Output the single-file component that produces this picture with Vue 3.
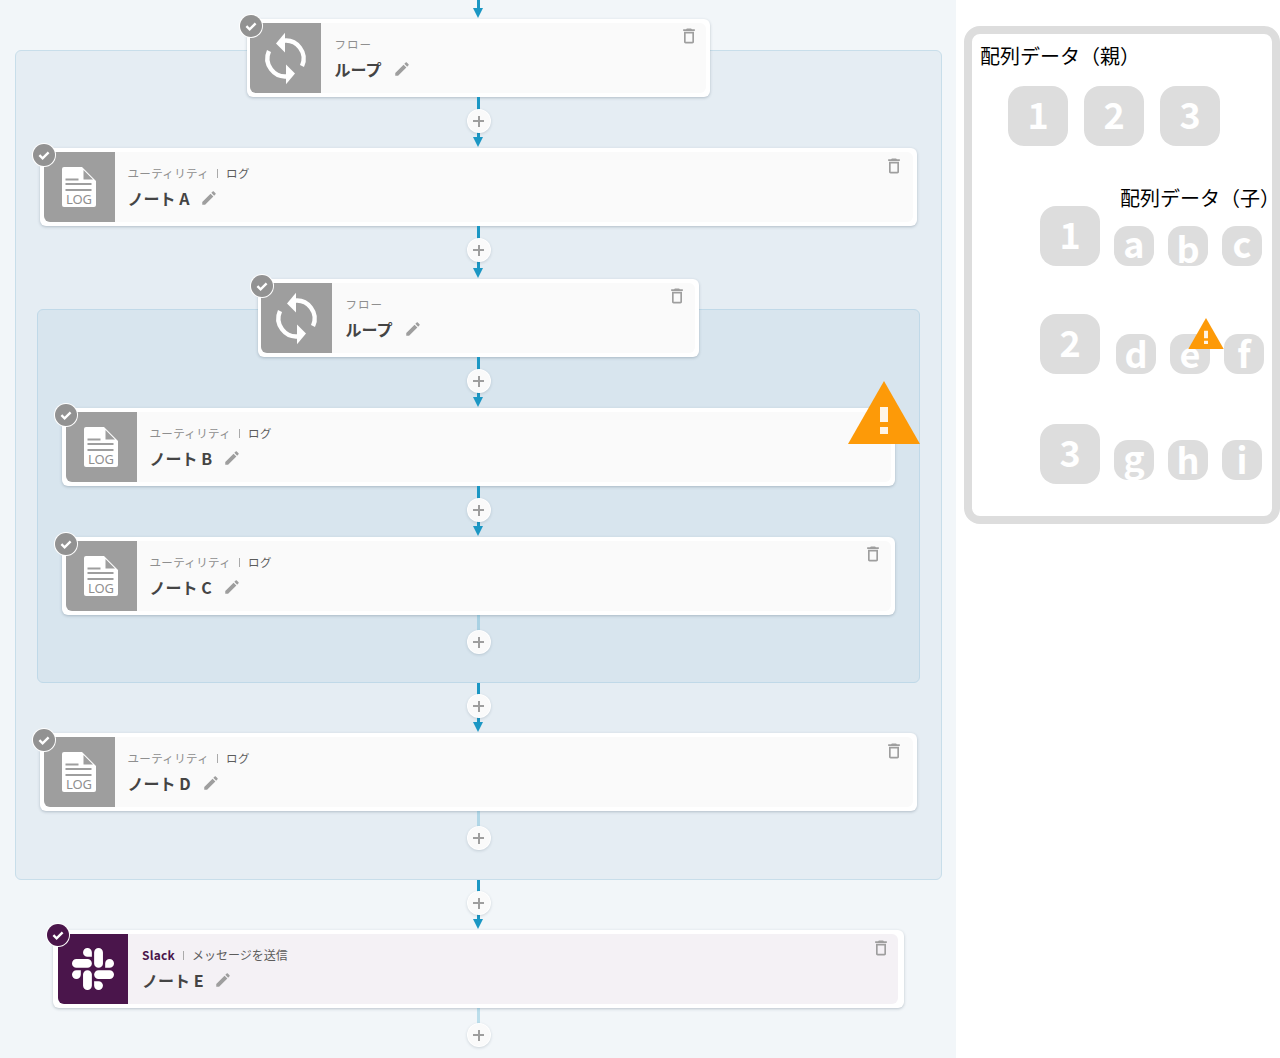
<script setup>
const noteTiles = [
  { n: 1, cls: 'first', letters: [{ t: 'a', lh: 32 }, { t: 'b', lh: 42 }, { t: 'c', lh: 32 }] },
  { n: 2, cls: 'second', letters: [{ t: 'd', lh: 36 }, { t: 'e', lh: 36 }, { t: 'f', lh: 36 }] },
  { n: 3, cls: 'third', letters: [{ t: 'g', lh: 33 }, { t: 'h', lh: 36 }, { t: 'i', lh: 36 }] },
]
</script>

<template>
  <div class="page">
    <svg class="defs" width="0" height="0" aria-hidden="true">
      <symbol id="i-check" viewBox="0 0 22 22">
        <path d="M6.4 11.2l3.2 3.2 6-6" fill="none" stroke="#fff" stroke-width="2.4" />
      </symbol>
      <symbol id="i-pencil" viewBox="0 0 24 24">
        <path d="M3 17.25V21h3.75L17.81 9.94l-3.75-3.75L3 17.25zM20.71 7.04c.39-.39.39-1.02 0-1.41l-2.34-2.34c-.39-.39-1.02-.39-1.41 0l-1.83 1.83 3.75 3.75 1.83-1.83z" />
      </symbol>
      <symbol id="i-trash" viewBox="0 0 24 24">
        <path d="M6 19c0 1.1.9 2 2 2h8c1.1 0 2-.9 2-2V7H6v12zM8 9h8v10H8V9zm7.5-5l-1-1h-5l-1 1H5v2h14V4h-3.5z" />
      </symbol>
      <symbol id="i-loop" viewBox="0 0 71 71">
        <g fill="none" stroke="#fff" stroke-width="4.4">
          <path d="M33 17.8A18 18 0 0 1 52 43" />
          <path d="M38 53.2A18 18 0 0 1 19 28" />
        </g>
        <path d="M35 9.8L26 20.5 35 29.5z" fill="#fff" />
        <path d="M36 61.2L45 50.5 36 41.5z" fill="#fff" />
      </symbol>
      <symbol id="i-log" viewBox="0 0 71 71">
        <path d="M20 15h18l14 14v24a2 2 0 0 1-2 2H20a2 2 0 0 1-2-2V17a2 2 0 0 1 2-2z" fill="#fff" />
        <path d="M39.500 18L49 27.500h-9.500z" fill="#9e9e9e" />
        <path d="M21.500 27.500h13M21.500 32h26M21.500 38h26" stroke="#9e9e9e" stroke-width="2" fill="none" />
      </symbol>
      <symbol id="i-slack" viewBox="0 0 24 24">
        <path fill="#fff" d="M5.042 15.165a2.528 2.528 0 0 1-2.52 2.523A2.528 2.528 0 0 1 0 15.165a2.527 2.527 0 0 1 2.522-2.52h2.52v2.52zM6.313 15.165a2.527 2.527 0 0 1 2.521-2.52 2.527 2.527 0 0 1 2.521 2.52v6.313A2.528 2.528 0 0 1 8.834 24a2.528 2.528 0 0 1-2.521-2.522v-6.313zM8.834 5.042a2.528 2.528 0 0 1-2.521-2.52A2.528 2.528 0 0 1 8.834 0a2.528 2.528 0 0 1 2.521 2.522v2.52H8.834zM8.834 6.313a2.528 2.528 0 0 1 2.521 2.521 2.528 2.528 0 0 1-2.521 2.521H2.522A2.528 2.528 0 0 1 0 8.834a2.528 2.528 0 0 1 2.522-2.521h6.312zM18.956 8.834a2.528 2.528 0 0 1 2.522-2.521A2.528 2.528 0 0 1 24 8.834a2.528 2.528 0 0 1-2.522 2.521h-2.522V8.834zM17.688 8.834a2.528 2.528 0 0 1-2.523 2.521 2.527 2.527 0 0 1-2.52-2.521V2.522A2.527 2.527 0 0 1 15.165 0a2.528 2.528 0 0 1 2.523 2.522v6.312zM15.165 18.956a2.528 2.528 0 0 1 2.523 2.522A2.528 2.528 0 0 1 15.165 24a2.527 2.527 0 0 1-2.52-2.522v-2.522h2.52zM15.165 17.688a2.527 2.527 0 0 1-2.52-2.523 2.526 2.526 0 0 1 2.52-2.52h6.313A2.527 2.527 0 0 1 24 15.165a2.528 2.528 0 0 1-2.522 2.523h-6.313z" />
      </symbol>
      <symbol id="i-warn" viewBox="0 0 72 63">
        <path d="M36 0L72 63H0z" fill="#fd9a08" />
        <path d="M32 26h8v15h-8zM32 46h8v7h-8z" fill="#fff" opacity=".9" />
      </symbol>
    </svg>

    <main class="flow">
      <div class="link start"><span class="line"></span><span class="arrow"></span></div>

      <section class="loop outer">
        <article class="card w-463 loop-card">
          <span class="check"><svg><use href="#i-check" /></svg></span>
          <div class="inner">
            <div class="icon"><svg class="icon-svg"><use href="#i-loop" /></svg></div>
            <div class="text">
              <p class="label">フロー</p>
              <p class="title">ループ<svg class="pencil"><use href="#i-pencil" /></svg></p>
            </div>
            <svg class="trash"><use href="#i-trash" /></svg>
          </div>
        </article>
        <div class="link"><span class="line"></span><button class="plus"></button><span class="arrow"></span></div>

        <article class="card w-877">
          <span class="check"><svg><use href="#i-check" /></svg></span>
          <div class="inner">
            <div class="icon">
              <svg class="icon-svg" viewBox="0 0 71 71"><use href="#i-log" /><text x="35" y="52" text-anchor="middle" class="log-text">LOG</text></svg>
            </div>
            <div class="text">
              <p class="label">ユーティリティ<i class="sep"></i><b>ログ</b></p>
              <p class="title">ノート A<svg class="pencil"><use href="#i-pencil" /></svg></p>
            </div>
            <svg class="trash"><use href="#i-trash" /></svg>
          </div>
        </article>
        <div class="link to-loop"><span class="line"></span><button class="plus"></button><span class="arrow"></span></div>

        <section class="loop nested">
          <article class="card w-441 loop-card">
            <span class="check"><svg><use href="#i-check" /></svg></span>
            <div class="inner">
              <div class="icon"><svg class="icon-svg"><use href="#i-loop" /></svg></div>
              <div class="text">
                <p class="label">フロー</p>
                <p class="title">ループ<svg class="pencil"><use href="#i-pencil" /></svg></p>
              </div>
              <svg class="trash"><use href="#i-trash" /></svg>
            </div>
          </article>
          <div class="link"><span class="line"></span><button class="plus"></button><span class="arrow"></span></div>

          <article class="card w-833">
            <span class="check"><svg><use href="#i-check" /></svg></span>
            <div class="inner">
              <div class="icon">
                <svg class="icon-svg" viewBox="0 0 71 71"><use href="#i-log" /><text x="35" y="52" text-anchor="middle" class="log-text">LOG</text></svg>
              </div>
              <div class="text">
                <p class="label">ユーティリティ<i class="sep"></i><b>ログ</b></p>
                <p class="title">ノート B<svg class="pencil"><use href="#i-pencil" /></svg></p>
              </div>
              <svg class="trash"><use href="#i-trash" /></svg>
            </div>
            <svg class="warn-big"><use href="#i-warn" /></svg>
          </article>
          <div class="link"><span class="line"></span><button class="plus"></button><span class="arrow"></span></div>

          <article class="card w-833">
            <span class="check"><svg><use href="#i-check" /></svg></span>
            <div class="inner">
              <div class="icon">
                <svg class="icon-svg" viewBox="0 0 71 71"><use href="#i-log" /><text x="35" y="52" text-anchor="middle" class="log-text">LOG</text></svg>
              </div>
              <div class="text">
                <p class="label">ユーティリティ<i class="sep"></i><b>ログ</b></p>
                <p class="title">ノート C<svg class="pencil"><use href="#i-pencil" /></svg></p>
              </div>
              <svg class="trash"><use href="#i-trash" /></svg>
            </div>
          </article>
          <div class="link tail"><span class="line"></span><button class="plus"></button></div>
        </section>
        <div class="link after-loop"><span class="line"></span><button class="plus"></button><span class="arrow"></span></div>

        <article class="card w-877">
          <span class="check"><svg><use href="#i-check" /></svg></span>
          <div class="inner">
            <div class="icon">
              <svg class="icon-svg" viewBox="0 0 71 71"><use href="#i-log" /><text x="35" y="52" text-anchor="middle" class="log-text">LOG</text></svg>
            </div>
            <div class="text">
              <p class="label">ユーティリティ<i class="sep"></i><b>ログ</b></p>
              <p class="title">ノート D<svg class="pencil"><use href="#i-pencil" /></svg></p>
            </div>
            <svg class="trash"><use href="#i-trash" /></svg>
          </div>
        </article>
        <div class="link tail"><span class="line"></span><button class="plus"></button></div>
      </section>
      <div class="link after-loop"><span class="line"></span><button class="plus"></button><span class="arrow"></span></div>

      <article class="card w-851 slack">
        <span class="check"><svg><use href="#i-check" /></svg></span>
        <div class="inner">
          <div class="icon"><svg class="slack-svg"><use href="#i-slack" /></svg></div>
          <div class="text">
            <p class="label"><strong>Slack</strong><i class="sep"></i><b>メッセージを送信</b></p>
            <p class="title">ノート E<svg class="pencil"><use href="#i-pencil" /></svg></p>
          </div>
          <svg class="trash"><use href="#i-trash" /></svg>
        </div>
      </article>
      <div class="link tail"><span class="line"></span><button class="plus"></button></div>
    </main>

    <aside class="side">
      <div class="box">
        <h2 class="heading">配列データ（親）</h2>
        <div class="parents">
          <span v-for="n in 3" :key="n" class="tile">{{ n }}</span>
        </div>
        <div v-for="row in noteTiles" :key="row.n" class="row" :class="row.cls">
          <span class="tile">{{ row.n }}</span>
          <div class="children">
            <h2 v-if="row.n === 1" class="heading child-heading">配列データ（子）</h2>
            <div class="letters">
              <span v-for="l in row.letters" :key="l.t" class="letter" :style="{ lineHeight: l.lh + 'px' }">
                {{ l.t }}
                <svg v-if="l.t === 'e'" class="warn-small"><use href="#i-warn" /></svg>
              </span>
            </div>
          </div>
        </div>
      </div>
    </aside>
  </div>
</template>

<style>
html,
body {
  margin: 0;
  background: #fff;
}
</style>

<style scoped>
.page {
  display: flex;
  width: 1280px;
  height: 1058px;
  overflow: hidden;
  font-family: "Noto Sans CJK JP", "Noto Sans", sans-serif;
}

.defs {
  position: absolute;
}

.log-text {
  font-family: "Noto Sans", sans-serif;
  font-size: 13px;
  fill: #8f8f8f;
}

.flow {
  flex: none;
  width: 955px;
  height: 1058px;
  padding-left: 1px;
  background: #f2f6f9;
  display: flex;
  flex-direction: column;
  align-items: center;
}

.loop {
  flex: none;
  box-sizing: border-box;
  display: flex;
  flex-direction: column;
  align-items: center;
  border-radius: 6px;
}

.outer {
  width: 927px;
  height: 830px;
  margin-top: 31px;
  background: #e5edf3;
  border: 1px solid #c8deea;
}

.nested {
  width: 883px;
  height: 374px;
  margin-top: 30px;
  background: #d8e5ee;
  border: 1px solid #c0d9e8;
}

.card {
  flex: none;
  position: relative;
  box-sizing: border-box;
  height: 78px;
  padding: 4px 4px 4px 3.5px;
  background: #fff;
  border-radius: 6px;
  box-shadow: 0 1px 3px rgba(60, 80, 100, 0.3);
}

.card.loop-card {
  padding-left: 3px;
}

.loop > .loop-card {
  margin-top: -32px;
}

.nested > .loop-card {
  margin-top: -31px;
}

.w-463 { width: 463px; }
.w-441 { width: 441px; }
.w-877 { width: 877px; }
.w-851 { width: 851px; }
.w-833 { width: 833px; }

.slack {
  padding: 4px 6px 4px 5px;
}

.inner {
  position: relative;
  display: flex;
  height: 70px;
  background: #fafafa;
  border-radius: 6px;
}

.slack .inner {
  background: #f4f1f5;
}

.icon {
  flex: none;
  width: 71px;
  height: 70px;
  background: #9e9e9e;
  border-radius: 0 0 0 6px;
  display: flex;
  align-items: center;
  justify-content: center;
}

.slack .icon {
  width: 70px;
  background: #4a154b;
}

.icon-svg {
  width: 71px;
  height: 71px;
}

.slack-svg {
  width: 42px;
  height: 42px;
}

.text {
  padding-left: 13px;
}

.loop-card .text {
  padding-left: 13.5px;
}

.slack .text {
  padding-left: 14px;
}

.label {
  margin: 12px 0 0;
  height: 18px;
  line-height: 18px;
  font-size: 11.5px;
  letter-spacing: 0.35px;
  color: #8f8f8f;
  display: flex;
  align-items: center;
}

.loop-card .label {
  letter-spacing: 1px;
}

.label b {
  font-weight: 400;
  color: #5c5c5c;
}

.label strong {
  font-weight: 700;
  font-size: 12px;
  letter-spacing: 0.2px;
  color: #4a154b;
}

.slack .label b {
  font-size: 12px;
  letter-spacing: 0;
}

.sep {
  width: 1px;
  height: 9px;
  margin: 0 8px;
  background: #aaa;
}

.title {
  margin: 4px 0 0;
  height: 24px;
  line-height: 24px;
  font-size: 16px;
  font-weight: 700;
  color: #444;
  display: flex;
  align-items: center;
}

.pencil {
  width: 18px;
  height: 18px;
  margin-left: 11px;
  fill: #9e9e9e;
}

.trash {
  position: absolute;
  top: 3px;
  right: 8px;
  width: 20px;
  height: 20px;
  fill: #9e9e9e;
}

.w-463 .trash {
  right: 7px;
}

.w-877 .trash {
  top: 4px;
  right: 9px;
}

.slack .trash {
  top: 4px;
  right: 7px;
}

.check {
  position: absolute;
  left: -7.5px;
  top: -4.5px;
  z-index: 1;
  width: 22px;
  height: 22px;
  border-radius: 50%;
  background: #929292;
  box-shadow: 0 0 0 1px #fff;
}

.slack .check {
  left: -6px;
  top: -6px;
  background: #4a154b;
}

.check svg {
  display: block;
  width: 22px;
  height: 22px;
}

.link {
  flex: none;
  position: relative;
  width: 24px;
  height: 51px;
}

.link.start {
  height: 19px;
}

.link.to-loop {
  height: 53px;
}

.link.after-loop {
  height: 50px;
}

.link.tail {
  height: 68px;
}

.line {
  position: absolute;
  left: 10.5px;
  top: 0;
  bottom: 9px;
  width: 2.5px;
  background: #1b97c4;
}

.start .line {
  bottom: 8px;
}

.tail .line {
  bottom: auto;
  height: 27px;
  background: rgba(27, 151, 196, 0.25);
}

.arrow {
  position: absolute;
  left: 6.5px;
  bottom: 1.5px;
  width: 0;
  height: 0;
  border-left: 5px solid transparent;
  border-right: 5px solid transparent;
  border-top: 10px solid #1b97c4;
}

.plus {
  position: absolute;
  left: 1px;
  top: 13px;
  box-sizing: border-box;
  width: 22px;
  height: 22px;
  padding: 0;
  border: 0;
  border-radius: 50%;
  background:
    linear-gradient(#9e9e9e, #9e9e9e) center / 11px 2px no-repeat,
    linear-gradient(#9e9e9e, #9e9e9e) center / 2px 11px no-repeat,
    #fafafa;
  box-shadow: 0 0 0 1px #fff, 0 1px 3px 1px rgba(60, 80, 100, 0.2);
}

.after-loop .plus {
  top: 12px;
}

.tail .plus {
  top: 16px;
}

.warn-big {
  position: absolute;
  top: -27px;
  right: -25px;
  z-index: 2;
  width: 72px;
  height: 63px;
}

.side {
  flex: none;
  width: 325px;
  box-sizing: border-box;
  padding: 26px 0 0 8px;
  background: #fff;
}

.box {
  box-sizing: border-box;
  width: 316px;
  height: 498px;
  padding: 8px 0 0 8px;
  border: 8px solid #ddd;
  border-radius: 16px;
}

.heading {
  margin: 0;
  height: 28px;
  line-height: 28px;
  font-size: 20px;
  font-weight: 400;
  color: #000;
  white-space: nowrap;
}

.parents {
  display: flex;
  gap: 16px;
  margin: 16px 0 0 28px;
}

.tile {
  flex: none;
  width: 60px;
  height: 60px;
  border-radius: 16px;
  background: #ddd;
  color: #fff;
  font-size: 36px;
  font-weight: 700;
  line-height: 54px;
  text-align: center;
}

.row {
  display: flex;
  align-items: flex-end;
  gap: 14px;
  margin-left: 60px;
}

.row.first {
  margin-top: 38px;
}

.row.second {
  margin-top: 48px;
  gap: 16px;
}

.row.third {
  margin-top: 50px;
}

.row.third .children {
  margin-bottom: 4px;
}

.child-heading {
  margin: 0 0 14px 6px;
}

.letters {
  display: flex;
  gap: 14px;
}

.letter {
  position: relative;
  flex: none;
  width: 40px;
  height: 40px;
  border-radius: 14px;
  background: #ddd;
  color: #fff;
  font-size: 36px;
  font-weight: 700;
  text-align: center;
}

.warn-small {
  position: absolute;
  left: 18px;
  top: -16px;
  width: 36px;
  height: 31px;
}
</style>
